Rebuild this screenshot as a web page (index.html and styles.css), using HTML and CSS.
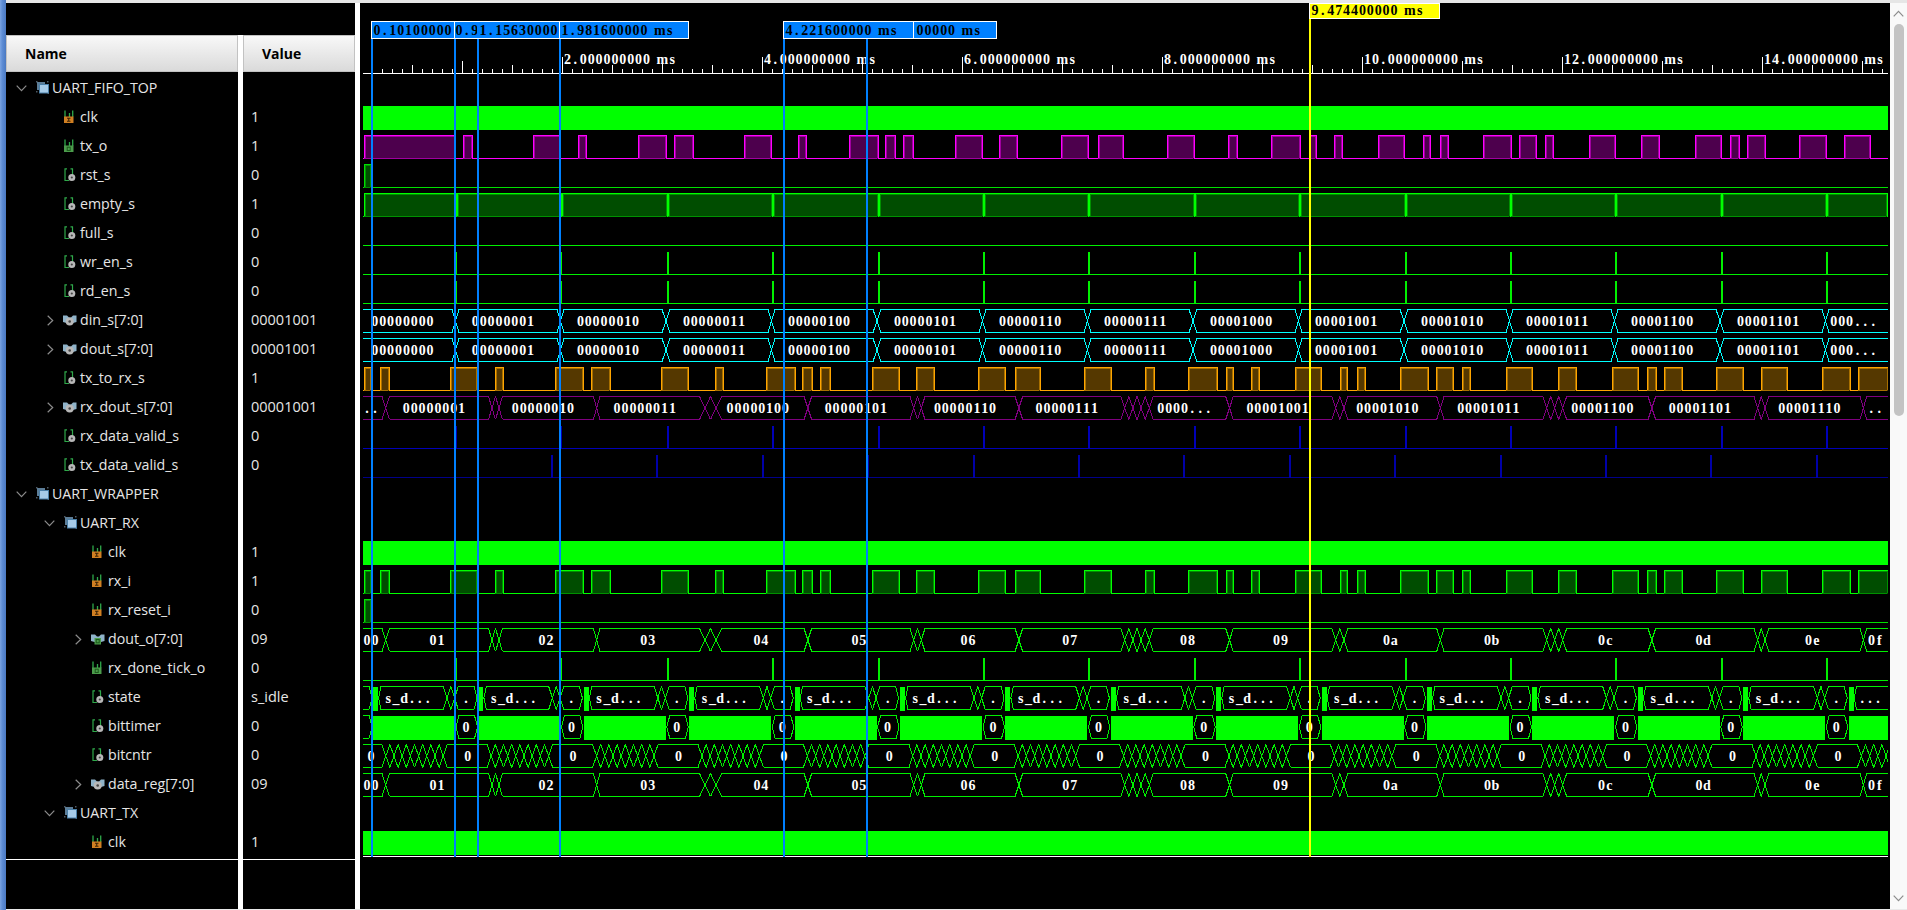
FILE: index.html
```html
<!DOCTYPE html>
<html lang="en">
<head>
<meta charset="utf-8">
<title>Vivado waveform</title>
<link rel="stylesheet" href="styles.css">
</head>
<body>
<svg class="defs" width="0" height="0" aria-hidden="true">
  <symbol id="i-down" viewBox="0 0 11 7"><path d="M.7 .7 5.5 5.7 10.3 .7" fill="none" stroke="#8c8c8c" stroke-width="1.2"/></symbol>
  <symbol id="i-right" viewBox="0 0 7 11"><path d="M.7 .7 5.7 5.5 .7 10.3" fill="none" stroke="#8c8c8c" stroke-width="1.2"/></symbol>
  <symbol id="i-mod" viewBox="0 0 16 16">
    <path d="M0 1h1.500v1.500H0zM11 1h1.500v1.500H11zM0 11h1.500v1.500H0zM11.500 12.500h1.500V14h-1.500z" fill="#4e5a64"/>
    <rect x="1" y="2" width="8" height="8" fill="#5c7d97"/>
    <rect x="3.500" y="4.500" width="9" height="8.500" fill="#a6cbe8" stroke="#4a7fa8"/>
  </symbol>
  <symbol id="i-in" viewBox="0 0 16 16">
    <path d="M1 7V.5M8.700 7V.5M5.500 7V3" fill="none" stroke="#2fa84a" stroke-width="1.300"/>
    <rect x="0" y="6.500" width="9.500" height="6.500" fill="#d07f22"/>
    <path d="M3 7.800h3.500v1h-1.200v2h1.200v1H3v-1h1.200v-2H3z" fill="#3a2204"/>
  </symbol>
  <symbol id="i-out" viewBox="0 0 16 16">
    <path d="M1 7V.5M8.700 7V.5M5.500 7V3" fill="none" stroke="#2fa84a" stroke-width="1.300"/>
    <rect x="0" y="6.500" width="9.500" height="6.500" fill="#4c9c4c"/>
    <rect x="3.200" y="8.200" width="3" height="3.300" fill="none" stroke="#1d5a1d"/>
  </symbol>
  <symbol id="i-sig" viewBox="0 0 16 16">
    <path d="M1 .5V12.500H5M8.500 .5V7M.5 .8H3M6.500 .8H9" fill="none" stroke="#2fa84a" stroke-width="1.200"/>
    <circle cx="7.800" cy="9.500" r="3.500" fill="#b8b8b8"/>
    <circle cx="7.800" cy="9.500" r="1.100" fill="#444"/>
  </symbol>
  <symbol id="i-busout" viewBox="0 0 16 16">
    <path d="M0 2.500H4L6 4.500H8L10 2.500H13.500V9L10 10H3.500L0 9z" fill="#8fb3c9"/>
    <rect x="3.500" y="6" width="6.500" height="6.500" fill="#4c9c4c"/>
    <rect x="5.200" y="7.500" width="3" height="3.300" fill="none" stroke="#1d5a1d"/>
  </symbol>
  <symbol id="i-bussig" viewBox="0 0 16 16">
    <path d="M0 2.500H4L6 4.500H8L10 2.500H13.500V9L10 10H3.500L0 9z" fill="#8fb3c9"/>
    <circle cx="6.700" cy="8.500" r="4" fill="#b8b8b8"/>
    <circle cx="6.700" cy="8.500" r="1.300" fill="#444"/>
  </symbol>
</svg>

<div class="app">
  <div class="edge"></div>
  <div class="content">
    <div class="band-top"></div>
    <div class="panes">
      <section class="signals">
        <div class="signals-top"></div>
        <div class="cols">
          <div class="col">
            <div class="hdr"><span class="hdr-name">Name</span></div>
            <div class="tree">
              <div class="rows">
                <div class="row l0"><svg class="tw-d"><use href="#i-down"/></svg><svg class="ic ic-mod"><use href="#i-mod"/></svg><span>UART_FIFO_TOP</span></div>
                <div class="row l1"><i class="tw"></i><svg class="ic"><use href="#i-in"/></svg><span>clk</span></div>
                <div class="row l1"><i class="tw"></i><svg class="ic"><use href="#i-out"/></svg><span>tx_o</span></div>
                <div class="row l1"><i class="tw"></i><svg class="ic"><use href="#i-sig"/></svg><span>rst_s</span></div>
                <div class="row l1"><i class="tw"></i><svg class="ic"><use href="#i-sig"/></svg><span>empty_s</span></div>
                <div class="row l1"><i class="tw"></i><svg class="ic"><use href="#i-sig"/></svg><span>full_s</span></div>
                <div class="row l1"><i class="tw"></i><svg class="ic"><use href="#i-sig"/></svg><span>wr_en_s</span></div>
                <div class="row l1"><i class="tw"></i><svg class="ic"><use href="#i-sig"/></svg><span>rd_en_s</span></div>
                <div class="row l1"><svg class="tw-r"><use href="#i-right"/></svg><svg class="ic ic-bus"><use href="#i-bussig"/></svg><span>din_s[7:0]</span></div>
                <div class="row l1"><svg class="tw-r"><use href="#i-right"/></svg><svg class="ic ic-bus"><use href="#i-bussig"/></svg><span>dout_s[7:0]</span></div>
                <div class="row l1"><i class="tw"></i><svg class="ic"><use href="#i-sig"/></svg><span>tx_to_rx_s</span></div>
                <div class="row l1"><svg class="tw-r"><use href="#i-right"/></svg><svg class="ic ic-bus"><use href="#i-bussig"/></svg><span>rx_dout_s[7:0]</span></div>
                <div class="row l1"><i class="tw"></i><svg class="ic"><use href="#i-sig"/></svg><span>rx_data_valid_s</span></div>
                <div class="row l1"><i class="tw"></i><svg class="ic"><use href="#i-sig"/></svg><span>tx_data_valid_s</span></div>
                <div class="row l0"><svg class="tw-d"><use href="#i-down"/></svg><svg class="ic ic-mod"><use href="#i-mod"/></svg><span>UART_WRAPPER</span></div>
                <div class="row l1"><svg class="tw-d"><use href="#i-down"/></svg><svg class="ic ic-mod"><use href="#i-mod"/></svg><span>UART_RX</span></div>
                <div class="row l2"><i class="tw"></i><svg class="ic"><use href="#i-in"/></svg><span>clk</span></div>
                <div class="row l2"><i class="tw"></i><svg class="ic"><use href="#i-in"/></svg><span>rx_i</span></div>
                <div class="row l2"><i class="tw"></i><svg class="ic"><use href="#i-in"/></svg><span>rx_reset_i</span></div>
                <div class="row l2"><svg class="tw-r"><use href="#i-right"/></svg><svg class="ic ic-bus"><use href="#i-busout"/></svg><span>dout_o[7:0]</span></div>
                <div class="row l2"><i class="tw"></i><svg class="ic"><use href="#i-out"/></svg><span>rx_done_tick_o</span></div>
                <div class="row l2"><i class="tw"></i><svg class="ic"><use href="#i-sig"/></svg><span>state</span></div>
                <div class="row l2"><i class="tw"></i><svg class="ic"><use href="#i-sig"/></svg><span>bittimer</span></div>
                <div class="row l2"><i class="tw"></i><svg class="ic"><use href="#i-sig"/></svg><span>bitcntr</span></div>
                <div class="row l2"><svg class="tw-r"><use href="#i-right"/></svg><svg class="ic ic-bus"><use href="#i-bussig"/></svg><span>data_reg[7:0]</span></div>
                <div class="row l1"><svg class="tw-d"><use href="#i-down"/></svg><svg class="ic ic-mod"><use href="#i-mod"/></svg><span>UART_TX</span></div>
                <div class="row l2"><i class="tw"></i><svg class="ic"><use href="#i-in"/></svg><span>clk</span></div>
              </div>
            </div>
          </div>
          <div class="col">
            <div class="hdr"><span class="hdr-value">Value</span></div>
            <div class="tree">
              <div class="rows values">
                <div class="row"></div>
                <div class="row">1</div>
                <div class="row">1</div>
                <div class="row">0</div>
                <div class="row">1</div>
                <div class="row">0</div>
                <div class="row">0</div>
                <div class="row">0</div>
                <div class="row">00001001</div>
                <div class="row">00001001</div>
                <div class="row">1</div>
                <div class="row">00001001</div>
                <div class="row">0</div>
                <div class="row">0</div>
                <div class="row"></div>
                <div class="row"></div>
                <div class="row">1</div>
                <div class="row">1</div>
                <div class="row">0</div>
                <div class="row">09</div>
                <div class="row">0</div>
                <div class="row">s_idle</div>
                <div class="row">0</div>
                <div class="row">0</div>
                <div class="row">09</div>
                <div class="row"></div>
                <div class="row">1</div>
              </div>
            </div>
          </div>
        </div>
      </section>
      <section class="wave" id="wave"></section>
      <aside class="scroll">
        <svg class="chev"><use href="#i-down" class="chev-up"/></svg>
        <div class="track"><div class="thumb"></div></div>
        <svg class="chev"><use href="#i-down"/></svg>
      </aside>
    </div>
    <div class="band-bottom"></div>
  </div>
</div>
<script src="waves.js"></script>
</body>
</html>
```
FILE: styles.css
```css
* { box-sizing: border-box; }
html, body { margin: 0; height: 100%; overflow: hidden; background: #e9e9e9; }
.defs { position: absolute; }
.app { display: flex; width: 1907px; height: 910px; font-family: "Open Sans", "Noto Sans", sans-serif; }
.edge { width: 6px; background: linear-gradient(90deg, #7ba4e2 0, #5d8cd4 40%, #4a79c2 100%); }
.content { flex: 1; display: flex; flex-direction: column; min-width: 0; }
.band-top { height: 3px; background: #e6e6e6; }
.band-bottom { height: 1px; background: #e9e9e9; }
.panes { flex: 1; display: flex; background: #fff; min-height: 0; }

.signals { width: 349px; display: flex; flex-direction: column; }
.signals-top { height: 32px; background: #000; }
.cols { flex: 1; display: grid; grid-template-columns: 232px 112px; column-gap: 5px; min-height: 0; }
.col { display: flex; flex-direction: column; min-height: 0; }
.hdr { height: 37px; display: flex; align-items: center; background: linear-gradient(180deg, #f8f8f8, #dadada); border: 1px solid #c2c2c2; font-size: 14px; font-weight: 700; color: #000; }
.hdr-name { padding-left: 18px; }
.hdr-value { padding-left: 18px; }
.tree { flex: 1; background: #000; padding-top: 2px; }
.rows { padding-bottom: 2px; border-bottom: 1px solid #fff; }
.row { height: 29px; display: flex; align-items: center; color: #e6e6e6; font-size: 14.200px; line-height: 1; white-space: nowrap; }
.l0 { padding-left: 10px; }
.l1 { padding-left: 38px; }
.l2 { padding-left: 66px; }
.tw { width: 20px; flex: none; }
.tw-d { width: 11px; height: 7px; margin-right: 9px; flex: none; }
.tw-r { width: 7px; height: 11px; margin: 0 9px 0 3px; flex: none; }
.ic { width: 16px; height: 16px; flex: none; }
.ic-mod { position: relative; top: -1px; }
.ic-bus { margin-right: 1px; }
.values .row { padding-left: 8px; font-size: 14.500px; }

.wave { width: 1530px; margin-left: 5px; background: #000; }
.wave svg { display: block; }
.lane { shape-rendering: crispEdges; }
.mono { font-family: "Liberation Serif", serif; font-weight: 700; font-size: 14px; }

.scroll { width: 17px; background: #f9f9f9; display: flex; flex-direction: column; align-items: center; }
.chev { width: 11px; height: 7px; margin: 7px 0; flex: none; }
.chev-up { transform: rotate(180deg); transform-origin: 5.500px 3.500px; }
.track { flex: 1; width: 10px; min-height: 0; }
.thumb { width: 100%; height: 392px; background: #c3c3c3; border-radius: 5px; }
```
FILE: waves.js
```js
(function () {
  var L = 363, R = 1888, STEP = 105.4;
  var out = [];
  function top(r) { return 74 + 29 * r; }
  function rect(x, y, w, h, f) { out.push('<rect x="' + x + '" y="' + y + '" width="' + w + '" height="' + h + '" fill="' + f + '"/>'); }
  function path(d, s) { out.push('<path d="' + d + '" fill="none" stroke="' + s + '"/>'); }

  var ADV = 7.9;
  var GW = { '.': 3.5, s: 5.4, m: 11.7, d: 7.8, _: 7, a: 7, b: 7.8, c: 6.2, e: 6.2, f: 4.7, ' ': 3.5 };
  function mono(x, y, s, fill) {
    var xs = [];
    for (var i = 0; i < s.length; i++) {
      var w = GW[s[i]] || 7;
      var extra = (i > 0 && s[i - 1] === 'm') ? 2 : 0;
      xs.push((x + i * ADV + (ADV - w) / 2 + extra).toFixed(1));
    }
    return '<text class="mono" x="' + xs.join(' ') + '" y="' + y + '" fill="' + fill + '">' + s + '</text>';
  }
  function label(cx, r, s) {
    out.push(mono(cx - s.length * ADV / 2, top(r) + 20, s, '#fff'));
  }
  function hy(r) { return top(r) + 3.5; }
  function ly(r) { return top(r) + 26.5; }

  function clock(r) { rect(L, top(r) + 3, R - L, 24, '#00ff00'); }

  function digital(r, col, fill, dim, spans) {
    var h = hy(r), l = ly(r), d = 'M' + L + ' ' + l;
    spans.forEach(function (s) {
      rect(s[0], h, s[1] - s[0], l - h, fill);
      d += 'H' + s[0] + 'V' + h + 'H' + s[1] + 'V' + l;
    });
    d += 'H' + R;
    path(d, col);
    spans.forEach(function (s) {
      var w = s[1] - s[0];
      var inner = 'M' + s[0] + ' ' + l + 'H' + (s[1] - 1);
      if (w > 4) inner += 'M' + (s[0] + 1) + ' ' + (l - 1) + 'V' + (h + 1) + 'H' + (s[1] - 1) + 'V' + (l - 1);
      path(inner, dim);
    });
  }

  function pulses(r, col, line, base, thinCount) {
    var h = hy(r), l = ly(r);
    path('M' + L + ' ' + l + 'H' + R, line);
    for (var k = 0; k < 14; k++) {
      var x = Math.round(base + STEP * k);
      rect(x, h, k < thinCount ? 1 : 2, l - h, col);
    }
  }

  function crosses(x0, x1, n, r, col) {
    var w = (x1 - x0) / n, h = hy(r), l = ly(r), d = '';
    for (var i = 0; i < n; i++) {
      var a = (x0 + w * i).toFixed(1), b = (x0 + w * (i + 1)).toFixed(1);
      d += 'M' + a + ' ' + h + 'L' + b + ' ' + l + 'M' + a + ' ' + l + 'L' + b + ' ' + h;
    }
    path(d, col);
  }

  // segs: [x0, x1, text, crossCountToNext, textShift]
  function bus(r, col, segs) {
    var h = hy(r), l = ly(r);
    segs.forEach(function (s, i) {
      path('M' + s[0] + ' ' + h + 'H' + s[1] + 'M' + s[0] + ' ' + l + 'H' + s[1], col);
      if (segs[i + 1]) crosses(s[1], segs[i + 1][0], s[3] || 1, r, col);
    });
    segs.forEach(function (s) {
      var off = s[2].length > 3 ? 5 : 2;
      if (s[4] !== undefined) off = s[4];
      label((s[0] + s[1]) / 2 - off, r, s[2]);
    });
  }

  /* ---------- ruler ---------- */
  path('M' + L + ' 73.5H' + R, '#fff');
  for (var i = 1; 362 + i * 10 < R; i++) {
    var x = 362 + i * 10;
    var y = i % 20 === 0 ? 57 : i % 10 === 0 ? 61 : i % 5 === 0 ? 65 : 69;
    rect(x, y, 1, 73 - y, '#fff');
    if (i % 20 === 0) out.push(mono(x + 1.5, 63.5, (i / 10).toFixed(9) + ' ms', '#fff'));
  }

  /* ---------- single-bit data ---------- */
  var tx = [[364, 455], [463, 472], [533, 560], [578, 586], [638, 666], [674, 693], [744, 771], [798, 806], [849, 878], [885, 895], [903, 913], [955, 982], [999, 1017], [1061, 1088], [1098, 1123], [1167, 1194], [1228, 1237], [1271, 1300], [1309, 1316], [1334, 1342], [1378, 1404], [1423, 1430], [1440, 1448], [1483, 1511], [1519, 1536], [1545, 1553], [1589, 1615], [1641, 1659], [1695, 1721], [1730, 1739], [1747, 1765], [1799, 1826], [1844, 1870]];
  var rxline = [[364, 371]].concat(tx.slice(1).map(function (s) { return [s[0] - 83, s[1] - 83]; }), [[1822, 1850], [1858, 1888]]);

  var empty = [[364, 456]];
  for (var k = 0; k < 14; k++) {
    var a = Math.round(456 + STEP * k) + 1;
    var b = k < 13 ? Math.round(456 + STEP * (k + 1)) : 1887;
    empty.push([a, b]);
  }

  /* ---------- buses ---------- */
  var bits = ['00000000', '00000001', '00000010', '00000011', '00000100', '00000101', '00000110', '00000111', '00001000', '00001001', '00001010', '00001011', '00001100', '00001101', '000...'];
  function dinSegs() {
    var segs = [];
    for (var k = 0; k < 15; k++) {
      var a = k === 0 ? L : Math.round(455.3 + STEP * (k - 1) + 3.7);
      var b = k === 14 ? R : Math.round(455.3 + STEP * k - 3.7);
      segs.push([a, b, bits[k], 1]);
    }
    return segs;
  }
  var rxEdges = [[L, 382, 1], [389.5, 488.5, 2], [502.5, 593.4, 1], [600, 699.5, 2], [721.6, 804, 1], [811.7, 910, 2], [925, 1015, 1], [1022.7, 1120.7, 4], [1153.3, 1225.7, 1], [1233.3, 1331.7, 2], [1348, 1436.7, 1], [1444, 1542.7, 3], [1566.7, 1648, 1], [1655.7, 1754, 2], [1768.7, 1860, 1], [1866.7, R, 1]];
  var rxText = ['..', '00000001', '00000010', '00000011', '00000100', '00000101', '00000110', '00000111', '0000...', '00001001', '00001010', '00001011', '00001100', '00001101', '00001110', '..'];
  var hexText = ['00', '01', '02', '03', '04', '05', '06', '07', '08', '09', '0a', '0b', '0c', '0d', '0e', '0f'];
  function rxSegs(txt) {
    return rxEdges.map(function (e, i) { return [e[0], e[1], txt[i], e[2], i === 0 ? (L + 382) / 2 - 371 : undefined]; });
  }

  /* ---------- rows ---------- */
  clock(1);
  digital(2, '#ff00ff', '#4d004d', '#a000a0', tx);
  digital(3, '#00e000', '#004d00', '#009000', [[364, 371]]);
  digital(4, '#00ff00', '#004d00', '#009000', empty);
  digital(5, '#00f000', '#000', '#00f000', []);
  pulses(6, '#00f000', '#00f000', 456, 2);
  pulses(7, '#00f000', '#00f000', 456, 2);
  bus(8, '#00ffff', dinSegs());
  bus(9, '#00ffff', dinSegs());
  digital(10, '#ffa500', '#553800', '#a87000', rxline);
  bus(11, '#800080', rxSegs(rxText));
  pulses(12, '#0000b8', '#0000b8', 456, 2);
  pulses(13, '#0000a8', '#00008a', 551, 0);

  clock(16);
  digital(17, '#00ff00', '#004d00', '#009000', rxline);
  digital(18, '#00e000', '#004d00', '#009000', [[364, 371]]);
  bus(19, '#00f000', rxSegs(hexText));
  pulses(20, '#00f000', '#00f000', 456, 2);

  // state
  (function () {
    var r = 21, h = hy(r), l = ly(r), m = (h + l) / 2, c = '#00f000';
    path('M' + L + ' ' + h + 'H369L372 ' + m + 'L369 ' + l + 'H' + L, c);
    for (var k = 0; k < 15; k++) {
      var O = STEP * k;
      rect((373 + O).toFixed(0), h, 5, l - h + 1, '#00ff00');
      var a = (378.5 + O).toFixed(1), b = (381 + O).toFixed(1), e = (443.3 + O).toFixed(1), f = (458.3 + O).toFixed(1), g = (474 + O).toFixed(1), j = (477 + O).toFixed(1);
      path('M' + a + ' ' + m + 'L' + b + ' ' + h + 'H' + e + 'M' + a + ' ' + m + 'L' + b + ' ' + l + 'H' + e, c);
      crosses(+e, +f, 2, r, c);
      path('M' + f + ' ' + h + 'H' + g + 'L' + j + ' ' + m + 'L' + g + ' ' + l + 'H' + f, c);
      label((k === 14 ? 1870 : 408 + O), r, k === 14 ? '...' : 's_d...');
      if (k < 14) label(466 + O, r, '.');
    }
  })();

  // bittimer
  (function () {
    var r = 22, h = hy(r), l = ly(r), m = (h + l) / 2, c = '#00f000';
    path('M' + L + ' ' + h + 'H369L372 ' + m + 'L369 ' + l + 'H' + L, c);
    for (var k = 0; k < 15; k++) {
      var O = STEP * k;
      rect(Math.round(373 + O), h, 82, l - h + 1, '#00ff00');
      if (k < 14) {
        var a = (456 + O).toFixed(1), b = (459 + O).toFixed(1), e = (474.5 + O).toFixed(1), f = (477.5 + O).toFixed(1);
        path('M' + a + ' ' + m + 'L' + b + ' ' + h + 'H' + e + 'L' + f + ' ' + m + 'L' + e + ' ' + l + 'H' + b + 'Z', c);
        label(466 + O, r, '0');
      }
    }
  })();

  // bitcntr
  (function () {
    var r = 23, h = hy(r), l = ly(r), c = '#00f000';
    path('M' + L + ' ' + h + 'H381.7M' + L + ' ' + l + 'H381.7', c);
    label(371, r, '0');
    for (var k = 0; k < 15; k++) {
      var O = STEP * k;
      crosses(381.7 + O, 447.3 + O, 8, r, c);
      path('M' + (447.3 + O).toFixed(1) + ' ' + h + 'H' + (488 + O).toFixed(1) + 'M' + (447.3 + O).toFixed(1) + ' ' + l + 'H' + (488 + O).toFixed(1), c);
      if (k < 14) label(467.7 + O, r, '0');
    }
  })();

  bus(24, '#00f000', rxSegs(hexText));
  clock(26);
  path('M' + L + ' 856.5H' + R, '#fff');

  var lanes = '<g class="lane" clip-path="url(#lane-clip)">' + out.join('') + '</g>';

  /* ---------- cursors ---------- */
  var cursors = '';
  [371, 454, 477, 559, 783, 866].forEach(function (x) {
    cursors += '<rect class="lane" x="' + x + '" y="38" width="2" height="819" fill="#0080ff"/>';
  });
  cursors += '<rect class="lane" x="1309" y="19" width="2" height="838" fill="#ffff00"/>';

  function flag(x, y, w, h, bg, s, tx0, noLeft) {
    var res = '<svg x="' + x + '" y="' + y + '" width="' + w + '" height="' + h + '">' +
      '<rect class="lane" x=".5" y=".5" width="' + (w - 1) + '" height="' + (h - 1) + '" fill="' + bg + '" stroke="#fff"/>' +
      mono(tx0, h - 4.5, s, '#000') + '</svg>';
    if (noLeft) res += '<rect class="lane" x="' + x + '" y="' + (y + 1) + '" width="1" height="' + (h - 2) + '" fill="' + bg + '"/>';
    return res;
  }
  var flags =
    flag(371, 21, 84, 18, '#0080ff', '0.10100000', 2) +
    flag(454, 21, 24, 18, '#0080ff', '0.9', 1) +
    flag(477, 21, 83, 18, '#0080ff', '1.15630000', 2, true) +
    flag(559, 21, 130, 18, '#0080ff', '1.981600000 ms', 2) +
    flag(783, 21, 131, 18, '#0080ff', '4.221600000 ms', 2) +
    flag(913, 21, 84, 18, '#0080ff', '00000 ms', 3) +
    flag(1309, 3, 131, 16, '#ffff00', '9.474400000 ms', 2);

  document.getElementById('wave').innerHTML =
    '<svg width="1530" height="906" viewBox="360 3 1530 906">' +
    '<defs><clipPath id="lane-clip"><rect x="' + L + '" y="0" width="' + (R - L) + '" height="910"/></clipPath></defs>' +
    lanes + cursors + flags + '</svg>';
})();
```
